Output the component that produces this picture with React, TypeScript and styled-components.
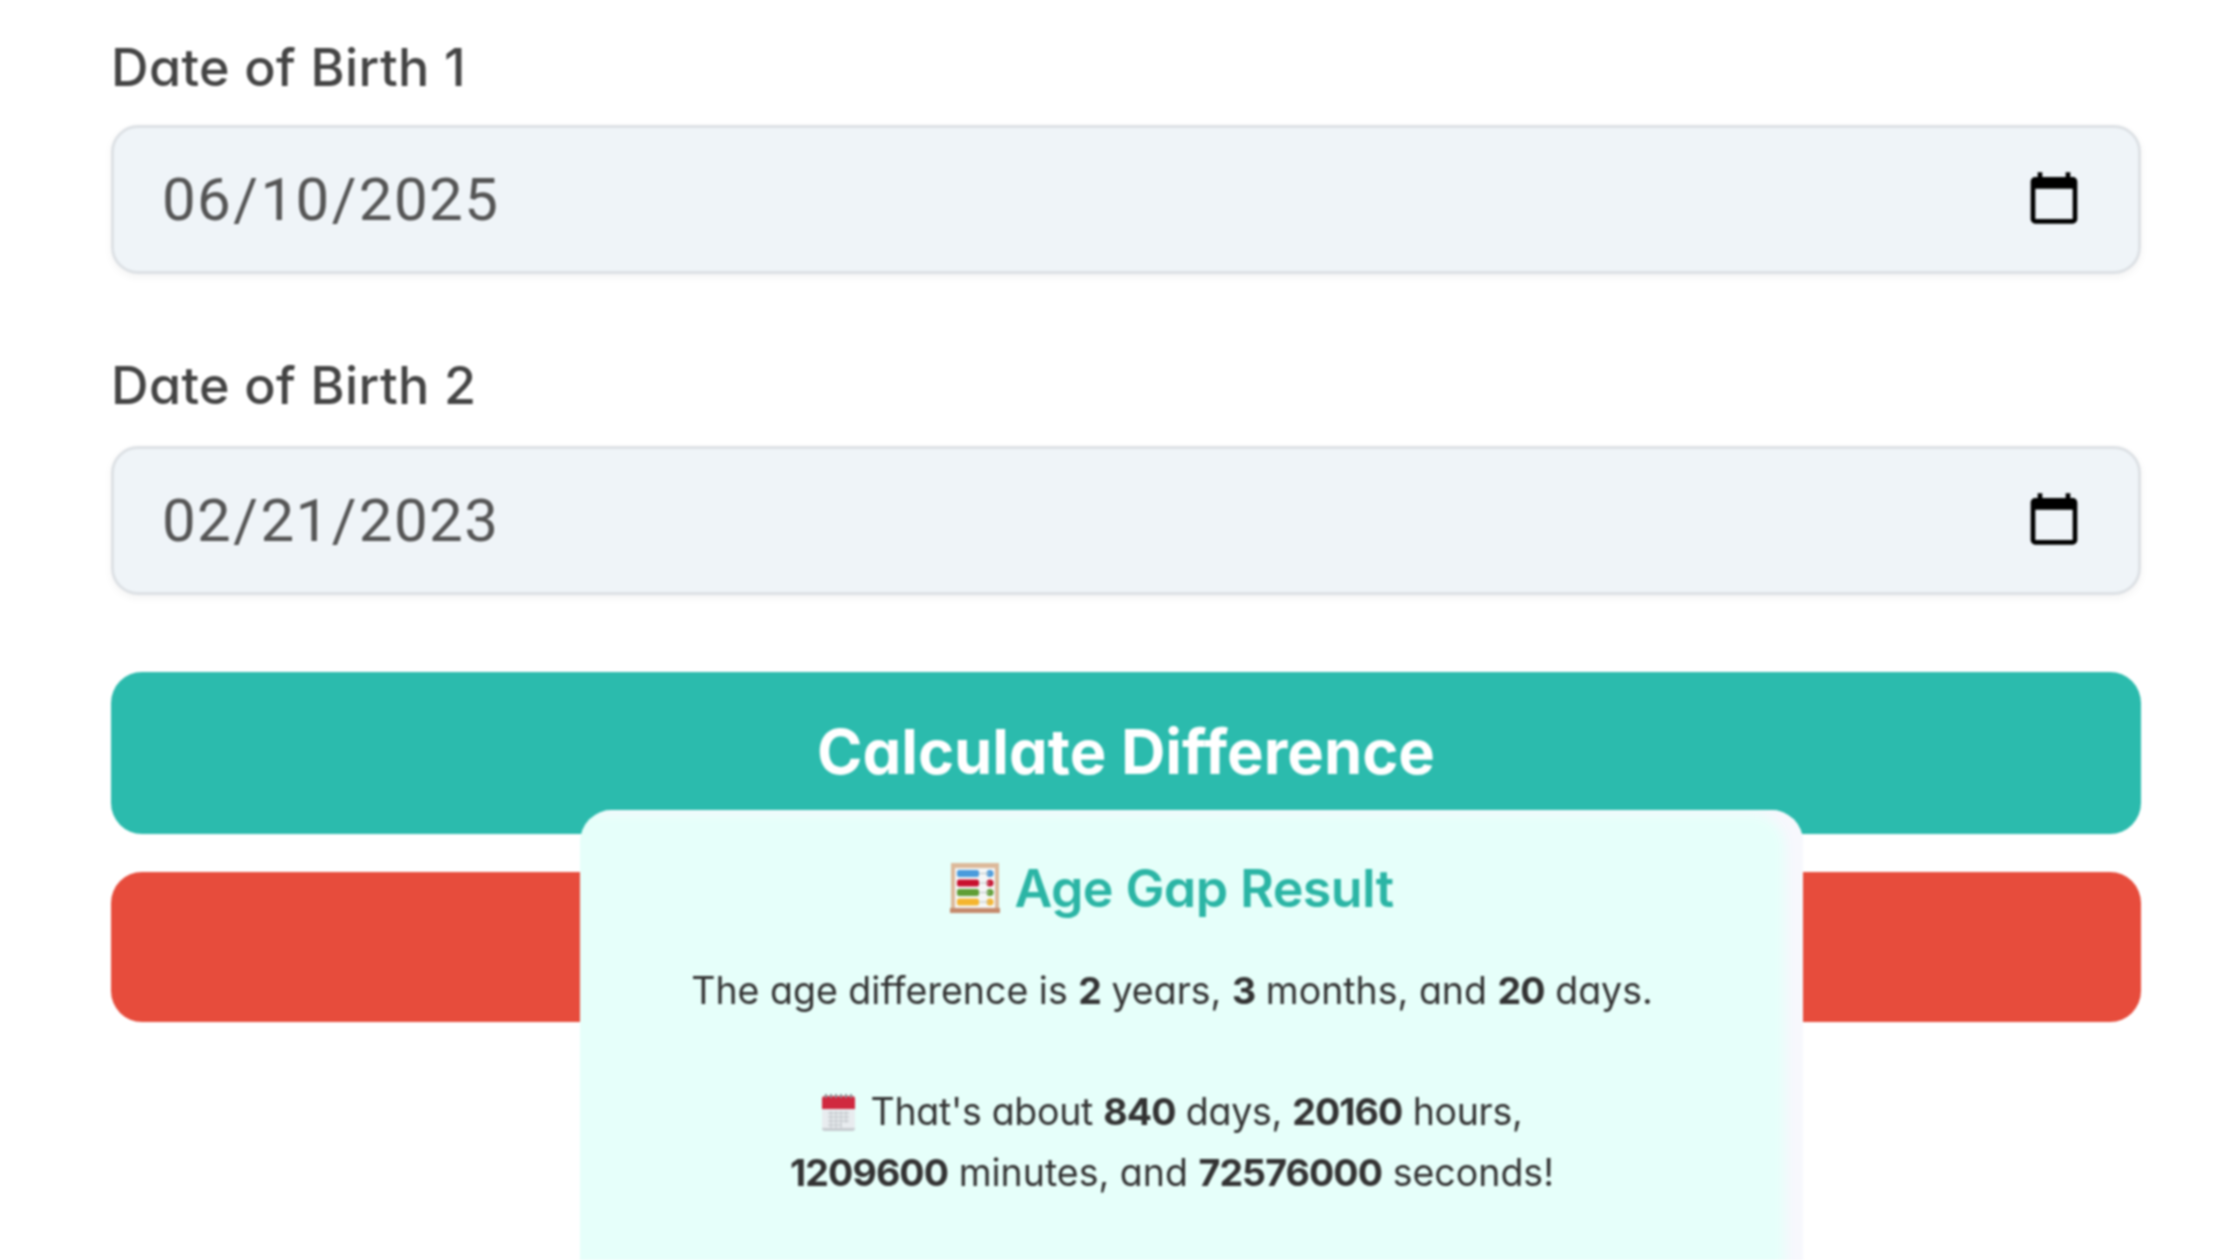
import React from "react";
import styled, { createGlobalStyle } from "styled-components";

const Global = createGlobalStyle`
  html, body { margin: 0; padding: 0; background: #fff; height: 100%; overflow: hidden; }
  #root { height: 100%; }
  ::-webkit-calendar-picker-indicator { width: 60px; height: 60px; padding: 0; margin: 0; opacity: 1; }
`;

const Page = styled.div`
  position: relative;
  box-sizing: border-box;
  width: 2240px;
  height: 1260px;
  overflow: hidden;
  padding: 40px 99px 0 111px;
  font-family: Inter, "Liberation Sans", sans-serif;
  font-feature-settings: "cv11" 1;
  background: #fff;
  filter: blur(0.8px);
`;

const Field = styled.div<{ $gap: number }>`
  display: flex;
  flex-direction: column;
  margin-bottom: ${(p) => p.$gap}px;
`;

const Label = styled.label<{ $gap: number }>`
  font-size: 52px;
  line-height: 56px;
  font-weight: 500;
  color: #444;
  margin-bottom: ${(p) => p.$gap}px;
  letter-spacing: 0.4px;
`;

const DateInput = styled.input`
  box-sizing: border-box;
  width: 100%;
  height: 149px;
  padding: 0 54px 0 47px;
  border: 3px solid #dde1e5;
  border-radius: 27px;
  background: #eff4f8;
  box-shadow: 0 3px 8px rgba(0, 0, 0, 0.05);
  font-family: Roboto, sans-serif;
  font-size: 60px;
  letter-spacing: 1.4px;
  color: #555;
  outline: none;
`;

const ActionButton = styled.button<{ $bg: string; $h: number }>`
  display: block;
  width: 100%;
  height: ${(p) => p.$h}px;
  border: none;
  border-radius: 31px;
  background: ${(p) => p.$bg};
  color: #fff;
  font-family: inherit;
  font-feature-settings: inherit;
  font-size: 61.5px;
  font-weight: 700;
  padding: 0 0 4px;
  margin-bottom: 38px;
`;

const ResultCard = styled.section`
  position: absolute;
  left: 580px;
  top: 810px;
  box-sizing: border-box;
  width: 1223px;
  height: 470px;
  padding: 43px 39px 0 0;
  border-radius: 32px 32px 0 0;
  background: #e6fffa;
  box-shadow: inset -20px 5px 12px -2px #f7f8fd;
  text-align: center;
`;

const ResultTitle = styled.h3`
  display: flex;
  align-items: center;
  justify-content: center;
  gap: 14px;
  margin: 0 0 38px;
  height: 70px;
  font-size: 52px;
  font-weight: 600;
  color: #2bb5a5;
  letter-spacing: -0.6px;
`;

const ResultText = styled.p`
  margin: 0;
  font-size: 37.5px;
  line-height: 60.5px;
  color: #333;
  b { font-weight: 700; letter-spacing: -0.9px; }
`;

const StatLine = styled.span`
  letter-spacing: -0.3px;
`;

const InlineIcon = styled.svg`
  display: inline-block;
  vertical-align: -6px;
  margin-right: 16px;
`;

const Abacus = () => (
  <svg width="50" height="50" viewBox="0 0 50 50" aria-hidden="true">
    <rect x="1" y="0" width="48" height="50" fill="#dcb99a" />
    <rect x="5" y="5" width="40" height="40" fill="#f4f6f6" />
    <rect x="0" y="45" width="50" height="5" fill="#c58a6c" />
    <rect x="7" y="7" width="22" height="7" rx="2" fill="#4a9bdc" />
    <circle cx="40" cy="10.5" r="3.5" fill="#4a9bdc" />
    <rect x="7" y="16.5" width="22" height="7" rx="2" fill="#c8102e" />
    <circle cx="40" cy="20" r="3.5" fill="#c8102e" />
    <rect x="7" y="26" width="22" height="7" rx="2" fill="#5f9e35" />
    <circle cx="40" cy="29.5" r="3.5" fill="#5f9e35" />
    <rect x="7" y="35.5" width="22" height="7" rx="2" fill="#f5b52e" />
    <circle cx="40" cy="39" r="3.5" fill="#f5b52e" />
    <path d="M29 10.5H40M29 20H40M29 29.5H40M29 39H40" stroke="#b9c4c4" strokeWidth="1" />
  </svg>
);

const CalendarEmoji = () => (
  <InlineIcon width="33" height="37" viewBox="0 0 33 37" aria-hidden="true">
    <rect x="0" y="2" width="33" height="35" rx="3" fill="#e8ecef" />
    <path d="M0 15V5a3 3 0 0 1 3-3h27a3 3 0 0 1 3 3v10z" fill="#d0293f" />
    <path d="M4 0v4M9 0v4M14 0v4M19 0v4M24 0v4M29 0v4" stroke="#8a8f94" strokeWidth="2" />
    <path d="M6 19h21M6 23h21M6 27h21M6 31h14M9 17v17M14 17v17M19 17v17M24 17v12" stroke="#c9ced2" strokeWidth="1.4" />
    <path d="M0 34h33v0a3 3 0 0 1-3 3H3a3 3 0 0 1-3-3z" fill="#c7ccd0" />
  </InlineIcon>
);

export default function App() {
  return (
    <Page>
      <Global />
      <Field $gap={84}>
        <Label $gap={29} htmlFor="dob1">Date of Birth 1</Label>
        <DateInput id="dob1" type="date" defaultValue="2025-06-10" />
      </Field>
      <Field $gap={77}>
        <Label $gap={32} htmlFor="dob2">Date of Birth 2</Label>
        <DateInput id="dob2" type="date" defaultValue="2023-02-21" />
      </Field>
      <ActionButton $bg="#2bbbad" $h={162}>Calculate Difference</ActionButton>
      <ActionButton $bg="#e74c3c" $h={150} aria-label="Reset" />
      <ResultCard>
        <ResultTitle><Abacus />Age Gap Result</ResultTitle>
        <ResultText>
          The age difference is <b>2</b> years, <b>3</b> months, and <b>20</b> days.
          <br /><br />
          <StatLine><CalendarEmoji />That's about <b>840</b> days, <b>20160</b> hours,</StatLine>
          <br />
          <b>1209600</b> minutes, and <b>72576000</b> seconds!
        </ResultText>
      </ResultCard>
    </Page>
  );
}
